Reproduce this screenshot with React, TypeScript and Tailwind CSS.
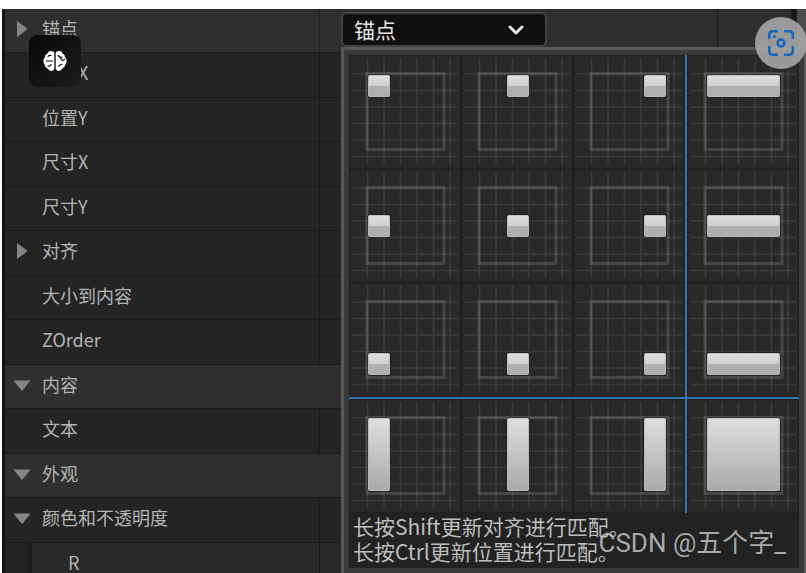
import { ChevronDown } from "lucide-react";

type Row = {
  label: string;
  arrow?: "right" | "down";
  header?: boolean;
};

const rows: Row[] = [
  { label: "位置X" },
  { label: "位置Y" },
  { label: "尺寸X" },
  { label: "尺寸Y" },
  { label: "对齐", arrow: "right" },
  { label: "大小到内容" },
  { label: "ZOrder" },
  { label: "内容", arrow: "down", header: true },
  { label: "文本" },
  { label: "外观", arrow: "down", header: true },
  { label: "颜色和不透明度", arrow: "down" },
];

function Arrow({ dir }: { dir?: "right" | "down" }) {
  if (!dir) return <span className="w-4 shrink-0" />;
  return (
    <button
      type="button"
      aria-label={dir === "down" ? "收起" : "展开"}
      className="flex w-4 shrink-0 justify-center"
    >
      <svg width="18" height="18" viewBox="0 0 18 18" className="shrink-0" fill="#858585">
        {dir === "down" ? (
          <path d="M0.5 5.500H17.500L10 15Q9 16 8 15Z" />
        ) : (
          <path d="M4 2V18L13.500 11Q14.500 10 13.500 9Z" />
        )}
      </svg>
    </button>
  );
}

function PropertyRow({ row }: { row: Row }) {
  return (
    <li
      className={`flex shrink-0 border-b border-[#191919] odd:h-[45px] even:h-11 ${
        row.header ? "bg-[#2f2f2f]" : "bg-[#242424]"
      }`}
    >
      <div
        className={`flex flex-1 items-center gap-3 pb-1.5 pl-[9px] ${
          row.header ? "" : "border-r border-[#191919]"
        }`}
      >
        <Arrow dir={row.arrow} />
        <span>{row.label}</span>
      </div>
      <div className="w-[21px]" />
    </li>
  );
}

const gridLines = [18, 34.5, 51, 67.5, 84, 100.5];
const startX = [19, 46, 71];
const startY = [20, 46, 70];

function AnchorTile({ col, row }: { col: number; row: number }) {
  const wide = col === 3;
  const tall = row === 3;
  const x = wide ? 20 : startX[col];
  const y = tall ? 19 : startY[row];
  const w = wide ? 73 : 22;
  const h = tall ? 73 : 22;
  return (
    <button type="button" aria-label={`锚点 ${row + 1}-${col + 1}`} className="flex justify-center p-px">
      <svg viewBox="1 1 110 112" className="h-28 w-full bg-[#282828]">
        <defs>
          <linearGradient id="tallFill" x1="0" y1="0" x2="0" y2="1">
            <stop offset="0" stopColor="#dedede" />
            <stop offset="1" stopColor="#aaaaaa" />
          </linearGradient>
          <linearGradient id="shortFill" x1="0" y1="0" x2="0" y2="1">
            <stop offset="0" stopColor="#dedede" />
            <stop offset="0.5" stopColor="#d0d0d0" />
            <stop offset="0.52" stopColor="#b0b0b0" />
            <stop offset="1" stopColor="#aeaeae" />
          </linearGradient>
        </defs>
        <g stroke="#3c3c3c" strokeWidth="1.600">
          {gridLines.map((p) => (
            <path key={p} d={`M${p + 0.5} 3V109M3 ${p + 1}H109`} />
          ))}
        </g>
        <rect x="18" y="18.500" width="77" height="76" fill="none" stroke="#ffffff" strokeOpacity="0.14" strokeWidth="3" />
        <rect x={x - 0.5} y={y - 0.5} width={w + 1} height={h + 1} rx="2" fill="#1c1c1c" />
        <rect
          x={x + 0.5}
          y={y + 0.5}
          width={w - 1}
          height={h - 1}
          rx="1"
          fill={tall ? "url(#tallFill)" : "url(#shortFill)"}
          stroke="#dcdcdc"
          strokeOpacity="0.7"
        />
      </svg>
    </button>
  );
}

function TileRow({ row }: { row: number }) {
  return (
    <div className="grid grid-cols-[1fr_1fr_1fr_2px_1fr]">
      <AnchorTile col={0} row={row} />
      <AnchorTile col={1} row={row} />
      <AnchorTile col={2} row={row} />
      <div className="bg-[#3774ab]" />
      <AnchorTile col={3} row={row} />
    </div>
  );
}

function BrainBadge() {
  return (
    <button
      type="button"
      aria-label="AI"
      className="absolute top-[35px] left-[29px] flex size-[52px] items-center justify-center rounded-lg bg-linear-to-br from-[#080808] to-[#1d1d1d]"
    >
      <svg width="24" height="22" viewBox="0 0 24 24" preserveAspectRatio="none">
        <path
          fill="#fff"
          d="M11.300 3Q10.500 0.800 7.500 1.200Q5 1.600 4.300 4Q1.800 5 1.900 7.800Q0.200 9.300 0.400 12Q0.300 15 2 16.500Q2 19.300 4.600 20.200Q6 23 8.500 22.800Q10.800 22.500 11.300 20.500ZM12.700 3Q13.500 0.800 16.500 1.200Q19 1.600 19.700 4Q22.200 5 22.100 7.800Q23.800 9.300 23.600 12Q23.700 15 22 16.500Q22 19.300 19.400 20.200Q18 23 15.500 22.800Q13.200 22.500 12.700 20.500Z"
        />
        <path
          fill="none"
          stroke="#111"
          strokeWidth="1.200"
          d="M4.800 7.500Q5.500 5.300 8.500 6M3 12H10M4.500 17.500Q7.500 18 8.500 15.500M15 5.500Q16 8.500 19.500 8M17 8.500L19.500 11.500L22 10M15.500 18.500Q16 16 19.500 15.500"
        />
      </svg>
    </button>
  );
}

function LensBadge() {
  return (
    <button
      type="button"
      aria-label="识图"
      className="absolute top-[17px] right-[-1px] flex size-[52px] items-center justify-center rounded-full bg-[#a6a6a6]/90"
    >
      <svg
        width="28"
        height="28"
        viewBox="0 0 28 28"
        fill="none"
        stroke="#0f67c0"
        strokeWidth="2.500"
        strokeLinecap="round"
      >
        <path d="M2.200 9V6Q2.200 2.200 6 2.200H10M18 2.200H22Q25.800 2.200 25.800 6V9M25.800 18V22Q25.800 25.800 22 25.800H18M10 25.800H6Q2.200 25.800 2.200 22V18" />
        <circle cx="14" cy="14" r="3.400" />
        <circle cx="7.500" cy="7.500" r="1.600" fill="#0f67c0" stroke="none" />
      </svg>
    </button>
  );
}

export default function App() {
  return (
    <div className="relative h-screen overflow-hidden bg-white pt-[9px] pl-0.5 font-['Noto_Sans_CJK_SC',sans-serif]">
      <div className="flex h-full border-l-[3px] border-[#151515] bg-[#242424]">
        <section className="w-[336px] shrink-0 text-lg leading-6 text-[#b4b4b4]">
          <div className="flex h-11 border-b border-[#191919] bg-[#2f2f2f]">
            <div className="flex flex-1 items-center gap-3 border-r border-[#222222] pb-1.5 pl-[9px]">
              <Arrow dir="right" />
              <span>锚点</span>
            </div>
            <div className="w-[21px]" />
          </div>
          <ul>
            {rows.map((row) => (
              <PropertyRow key={row.label} row={row} />
            ))}
          </ul>
          <div className="flex h-11">
            <div className="w-[27px] bg-linear-to-r from-[#242424] from-70% to-[#1a1a1a]" />
            <div className="flex flex-1 items-center border-r border-[#191919] bg-[#292929] pb-1.5 pl-9">R</div>
            <div className="w-[21px] bg-[#292929]" />
          </div>
        </section>

        <section className="flex min-w-0 flex-1 flex-col">
          <div className="flex h-[38px] bg-[#2f2f2f]">
            <div className="flex-1 border-r border-[#191919] pt-[3px]">
              <button
                type="button"
                className="flex h-[35px] w-[206px] items-center justify-between rounded-md border-2 border-[#424242] bg-[#0f0f0f] pr-[17px] pb-0.5 pl-[11px] text-[21px] leading-6 text-[#e4e4e4]"
              >
                锚点
                <ChevronDown size={24} strokeWidth={3} className="mt-0.5" />
              </button>
            </div>
            <div className="w-[73px]" />
            <div className="w-1.5 bg-[#191919]" />
            <div className="w-[9px] bg-[#4c4c4c]" />
          </div>

          <div className="flex-1 border-t-[3px] border-r-2 border-l-[3px] border-[#585858] bg-[#3a3a3a] p-[5px]">
            <div className="flex h-full flex-col bg-[#1f1f1f]">
              <TileRow row={0} />
              <TileRow row={1} />
              <TileRow row={2} />
              <div className="h-0.5 shrink-0 bg-[#3774ab]" />
              <TileRow row={3} />
              <p className="flex-1 bg-[#222222] pt-px pl-1 text-[21px] leading-[25px] whitespace-nowrap text-[#bdbdbd]">
                长按Shift更新对齐进行匹配。
                <br />
                长按Ctrl更新位置进行匹配。
              </p>
            </div>
          </div>
        </section>
      </div>

      <BrainBadge />
      <LensBadge />
      <span className="absolute right-5 bottom-3 font-[Roboto,'Noto_Sans_CJK_SC',sans-serif] text-[26px] leading-9 text-[#bcbcbc]/90">
        CSDN @五个字_
      </span>
    </div>
  );
}
